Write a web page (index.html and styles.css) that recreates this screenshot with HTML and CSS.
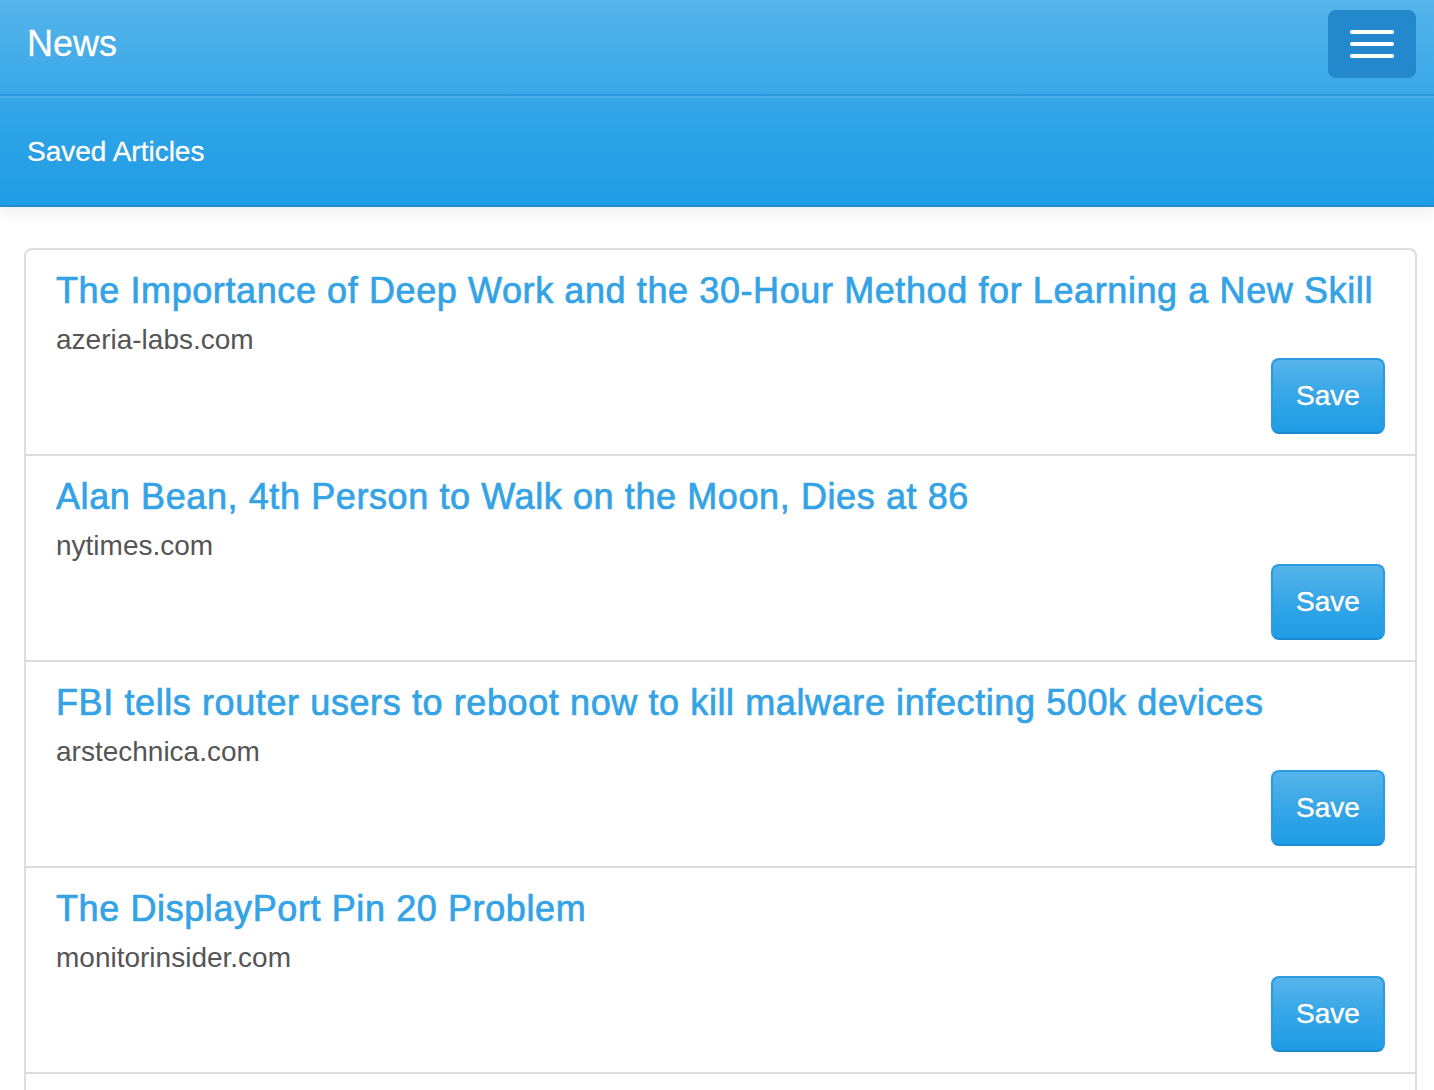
FILE: index.html
```html
<!DOCTYPE html>
<html lang="en">
<head>
<meta charset="utf-8">
<title>News</title>
<link rel="stylesheet" href="styles.css">
</head>
<body>
<nav class="navbar">
  <div class="navbar-header">
    <a class="brand" href="#">News</a>
    <button class="toggle" type="button" aria-label="Toggle navigation">
      <span class="bar"></span><span class="bar"></span><span class="bar"></span>
    </button>
  </div>
  <div class="collapse">
    <a class="nav-link" href="#">Saved Articles</a>
  </div>
</nav>
<main class="content">
  <ul class="list">
    <li class="item">
      <h4 class="title">The Importance of Deep Work and the 30-Hour Method for Learning a New Skill</h4>
      <p class="domain">azeria-labs.com</p>
      <div class="actions"><button class="btn" type="button">Save</button></div>
    </li>
    <li class="item">
      <h4 class="title">Alan Bean, 4th Person to Walk on the Moon, Dies at 86</h4>
      <p class="domain">nytimes.com</p>
      <div class="actions"><button class="btn" type="button">Save</button></div>
    </li>
    <li class="item">
      <h4 class="title">FBI tells router users to reboot now to kill malware infecting 500k devices</h4>
      <p class="domain">arstechnica.com</p>
      <div class="actions"><button class="btn" type="button">Save</button></div>
    </li>
    <li class="item">
      <h4 class="title">The DisplayPort Pin 20 Problem</h4>
      <p class="domain">monitorinsider.com</p>
      <div class="actions"><button class="btn" type="button">Save</button></div>
    </li>
    <li class="item item-last"></li>
  </ul>
</main>
</body>
</html>
```

FILE: styles.css
```css
* { box-sizing: border-box; }

html, body {
  margin: 0;
  padding: 0;
  background: #fff;
}

body {
  font-family: "Liberation Sans", Arial, Helvetica, sans-serif;
  color: #555;
}

.navbar {
  background-image: linear-gradient(#56b4ea 0%, #2fa4e7 60%, #1f9ce4 100%);
  border-bottom: 2px solid #1e8dd0;
  box-shadow: 0 2px 20px rgba(0, 0, 0, 0.1);
}

.navbar-header {
  height: 94px;
  display: flex;
  align-items: flex-start;
  justify-content: space-between;
}

.brand {
  color: #fff;
  text-decoration: none;
  font-size: 36px;
  line-height: 40px;
  padding: 24px 0 0 27px;
  -webkit-text-stroke: 0.3px #fff;
  text-shadow: 0 1px 1px rgba(0, 0, 0, 0.12);
}

.toggle {
  margin: 10px 18px 0 0;
  width: 88px;
  height: 68px;
  border: none;
  border-radius: 8px;
  background: #2389cc;
  display: flex;
  flex-direction: column;
  align-items: center;
  justify-content: center;
  gap: 8px;
  padding: 0;
  cursor: pointer;
}

.bar {
  display: block;
  width: 44px;
  height: 4px;
  border-radius: 2px;
  background: #fff;
}

.collapse {
  border-top: 2px solid #2a97dc;
  box-shadow: inset 0 2px 0 rgba(255, 255, 255, 0.1);
  height: 111px;
  padding: 41px 0 0 27px;
}

.nav-link {
  color: #fff;
  text-decoration: none;
  font-size: 28px;
  line-height: 30px;
  -webkit-text-stroke: 0.3px #fff;
  text-shadow: 0 1px 1px rgba(0, 0, 0, 0.1);
}

.content {
  margin: 41px 17px 0 24px;
}

.list {
  list-style: none;
  margin: 0;
  padding: 0;
  border: 2px solid #ddd;
  border-bottom: none;
  border-radius: 8px 8px 0 0;
}

.item {
  padding: 21px 30px 20px 30px;
  border-bottom: 2px solid #ddd;
}

.item-last {
  height: 60px;
  border-bottom: none;
}

.title {
  margin: 0 0 10px 0;
  font-size: 36px;
  line-height: 39.6px;
  font-weight: normal;
  letter-spacing: 0.6px;
  color: #33a3e6;
  -webkit-text-stroke: 0.7px #33a3e6;
}

.domain {
  margin: 0;
  font-size: 28px;
  line-height: 37.4px;
  color: #555;
}

.actions {
  display: flex;
  justify-content: flex-end;
}

.btn {
  width: 114px;
  height: 76px;
  border: 2px solid #2a9be0;
  border-bottom-color: #1a8bd0;
  border-radius: 8px;
  background-image: linear-gradient(#56b4ea 0%, #2fa4e7 60%, #1f9ce4 100%);
  color: #fff;
  font-family: "Liberation Sans", Arial, Helvetica, sans-serif;
  font-size: 28px;
  -webkit-text-stroke: 0.4px #fff;
  text-shadow: 0 -1px 1px rgba(0, 0, 0, 0.12);
  padding: 0;
  cursor: pointer;
}
```
